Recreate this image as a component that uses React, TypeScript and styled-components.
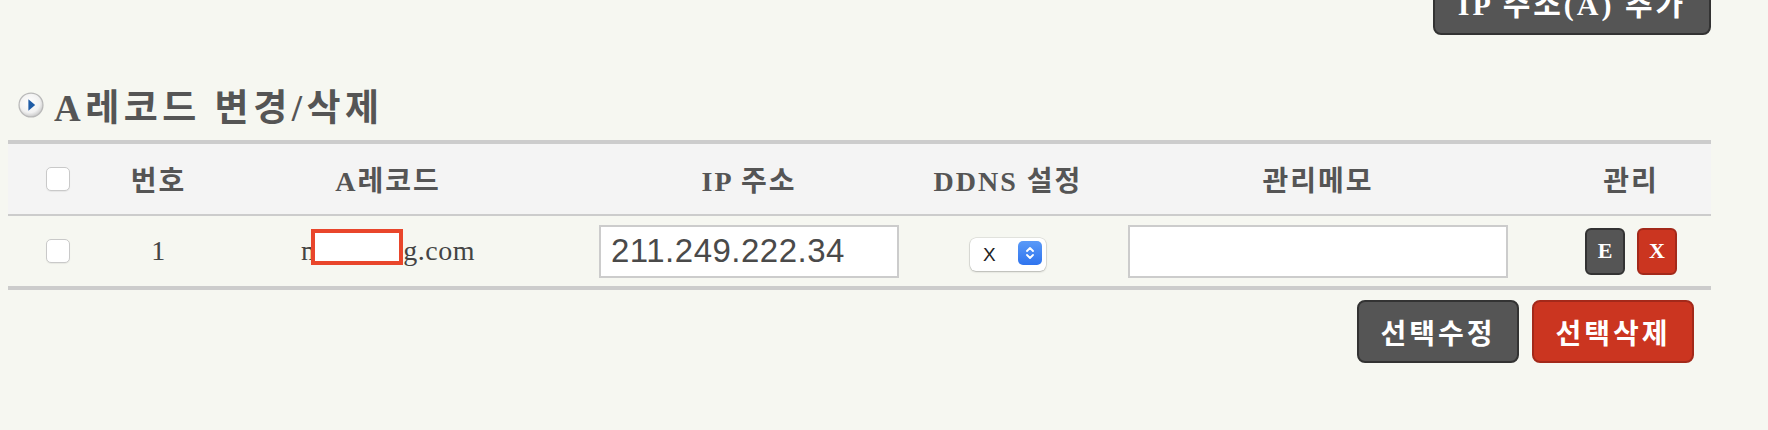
import styled, { createGlobalStyle } from "styled-components";

const serif = `"Liberation Serif", "Noto Sans CJK KR", serif`;

const GlobalStyle = createGlobalStyle`
    html, body {
        margin: 0;
        padding: 0;
        background: #f6f7f1;
        font-family: ${serif};
        color: #444;
    }
`;

const Page = styled.div`
    width: 1703px;
    margin-left: 8px;
`;

/* 상단 추가 버튼 영역 (스크롤로 위쪽이 잘려 보임) */
const TopBar = styled.div`
    display: flex;
    justify-content: flex-end;
    margin-top: -28px;
`;

const Button = styled.button<{ $tone: "dark" | "red" }>`
    box-sizing: border-box;
    display: inline-flex;
    align-items: center;
    justify-content: center;
    padding: 0;
    font-family: ${serif};
    font-weight: 700;
    color: #fff;
    cursor: pointer;
    background: ${p => (p.$tone === "red" ? "#cb3520" : "#555555")};
    border: 2px solid ${p => (p.$tone === "red" ? "#a3291a" : "#333333")};
`;

const AddButton = styled(Button)`
    width: 278px;
    height: 63px;
    padding-bottom: 3px;
    border-radius: 8px;
    font-size: 30px;
    letter-spacing: 3px;
`;

const ActionButton = styled(Button)`
    width: 162px;
    height: 63px;
    border-radius: 8px;
    font-size: 28px;
    letter-spacing: 3px;
`;

const MiniButton = styled(Button)`
    width: 40px;
    height: 47px;
    border-radius: 6px;
    font-size: 22px;
`;

const SectionTitle = styled.div`
    display: flex;
    align-items: center;
    gap: 10px;
    height: 50px;
    margin: 45px 0 10px;
    padding-left: 10px;
`;

const Heading = styled.h3`
    margin: 0;
    font-size: 37px;
    font-weight: 700;
    letter-spacing: 4.5px;
    color: #555;
`;

const RecordTable = styled.table`
    width: 1703px;
    table-layout: fixed;
    border-collapse: separate;
    border-spacing: 0;
`;

const Th = styled.th`
    height: 70px;
    padding: 0;
    background: #f4f4f4;
    border-top: 4px solid #cccccc;
    border-bottom: 2px solid #cccccc;
    font-size: 28px;
    font-weight: 700;
    letter-spacing: 2px;
    color: #555;
    text-align: center;
`;

const Td = styled.td`
    height: 70px;
    padding: 0;
    border-bottom: 4px solid #cccccc;
    font-size: 28px;
    letter-spacing: 0.5px;
    color: #444;
    text-align: center;
    vertical-align: middle;
`;

const CheckBox = styled.input.attrs({ type: "checkbox" })`
    appearance: none;
    box-sizing: border-box;
    display: block;
    width: 24px;
    height: 24px;
    margin: 0 auto;
    background: #fff;
    border: 1px solid #c9c9c9;
    border-radius: 5px;
    box-shadow: 0 1px 1px rgba(0, 0, 0, 0.06);
`;

/* 가려진 도메인 부분 (줄 높이에 영향 없도록 음수 여백) */
const Redacted = styled.span`
    display: inline-block;
    box-sizing: border-box;
    width: 92px;
    height: 36px;
    margin: -10px 0 -10px -12px;
    vertical-align: 5px;
    background: #fff;
    border: 4px solid #e9462b;
`;

const TextField = styled.input<{ $width: number }>`
    box-sizing: border-box;
    display: block;
    width: ${p => p.$width}px;
    height: 53px;
    margin: 0 auto;
    padding: 0 10px;
    background: #fff;
    border: 2px solid #cccccc;
    font-family: "Liberation Sans", Arial, sans-serif;
    font-size: 33px;
    letter-spacing: 0.5px;
    color: #4a4a4a;
    outline: none;
`;

const SelectWrap = styled.span`
    position: relative;
    display: inline-block;
    width: 76px;
    height: 33px;
    vertical-align: middle;
`;

const Select = styled.select`
    appearance: none;
    box-sizing: border-box;
    width: 76px;
    height: 33px;
    padding: 0 0 0 13px;
    background: #fff;
    border: none;
    border-radius: 6px;
    box-shadow: 0 0 0 0.5px rgba(0, 0, 0, 0.15), 0 1px 2px rgba(0, 0, 0, 0.2);
    font-family: "Liberation Sans", Arial, sans-serif;
    font-size: 19px;
    color: #222;
`;

const Chevron = styled.span`
    position: absolute;
    top: 5px;
    right: 4px;
    width: 24px;
    height: 24px;
    border-radius: 5px;
    background: linear-gradient(#5a9af8, #2f74ee);
    display: flex;
    align-items: center;
    justify-content: center;
    pointer-events: none;
`;

const ManageCell = styled.div`
    display: flex;
    justify-content: center;
    gap: 12px;
`;

const Actions = styled.div`
    display: flex;
    justify-content: flex-end;
    gap: 13px;
    margin-top: 10px;
    padding-right: 17px;
`;

const TitleIcon = () => (
    <svg width="26" height="26" viewBox="0 0 25 25">
        <defs>
            <radialGradient id="ti" cx="45%" cy="40%" r="60%">
                <stop offset="0%" stopColor="#ffffff" />
                <stop offset="70%" stopColor="#f1f1f1" />
                <stop offset="100%" stopColor="#c9c9c9" />
            </radialGradient>
        </defs>
        <circle cx="12.5" cy="12.5" r="11.5" fill="url(#ti)" stroke="#b9b9b9" strokeWidth="1.2" />
        <path d="M10 7 L16.5 12.5 L10 18 Z" fill="#1f5ca6" />
    </svg>
);

const App = () => {
    return (
        <Page>
            <GlobalStyle />
            <TopBar>
                <AddButton $tone="dark">IP 주소(A) 추가</AddButton>
            </TopBar>

            {/* A레코드 변경/삭제 */}
            <SectionTitle>
                <TitleIcon />
                <Heading>A레코드 변경/삭제</Heading>
            </SectionTitle>

            <RecordTable>
                <colgroup>
                    <col style={{ width: 100 }} />
                    <col style={{ width: 101 }} />
                    <col style={{ width: 358 }} />
                    <col style={{ width: 364 }} />
                    <col style={{ width: 154 }} />
                    <col style={{ width: 466 }} />
                    <col style={{ width: 160 }} />
                </colgroup>
                <thead>
                    <tr>
                        <Th><CheckBox /></Th>
                        <Th>번호</Th>
                        <Th>A레코드</Th>
                        <Th>IP 주소</Th>
                        <Th>DDNS 설정</Th>
                        <Th>관리메모</Th>
                        <Th>관리</Th>
                    </tr>
                </thead>
                <tbody>
                    <tr>
                        <Td><CheckBox /></Td>
                        <Td>1</Td>
                        <Td>m<Redacted />g.com</Td>
                        <Td><TextField $width={300} defaultValue="211.249.222.34" /></Td>
                        <Td>
                            <SelectWrap>
                                <Select defaultValue="X">
                                    <option value="X">X</option>
                                    <option value="O">O</option>
                                </Select>
                                <Chevron>
                                    <svg width="12" height="16" viewBox="0 0 12 16">
                                        <path d="M3 6 L6 3 L9 6 M3 10 L6 13 L9 10" fill="none" stroke="#fff" strokeWidth="1.8" strokeLinecap="round" strokeLinejoin="round" />
                                    </svg>
                                </Chevron>
                            </SelectWrap>
                        </Td>
                        <Td><TextField $width={380} defaultValue="" /></Td>
                        <Td>
                            <ManageCell>
                                <MiniButton $tone="dark">E</MiniButton>
                                <MiniButton $tone="red">X</MiniButton>
                            </ManageCell>
                        </Td>
                    </tr>
                </tbody>
            </RecordTable>

            {/* 선택 수정 및 삭제 */}
            <Actions>
                <ActionButton $tone="dark">선택수정</ActionButton>
                <ActionButton $tone="red">선택삭제</ActionButton>
            </Actions>
        </Page>
    );
};

export default App;
